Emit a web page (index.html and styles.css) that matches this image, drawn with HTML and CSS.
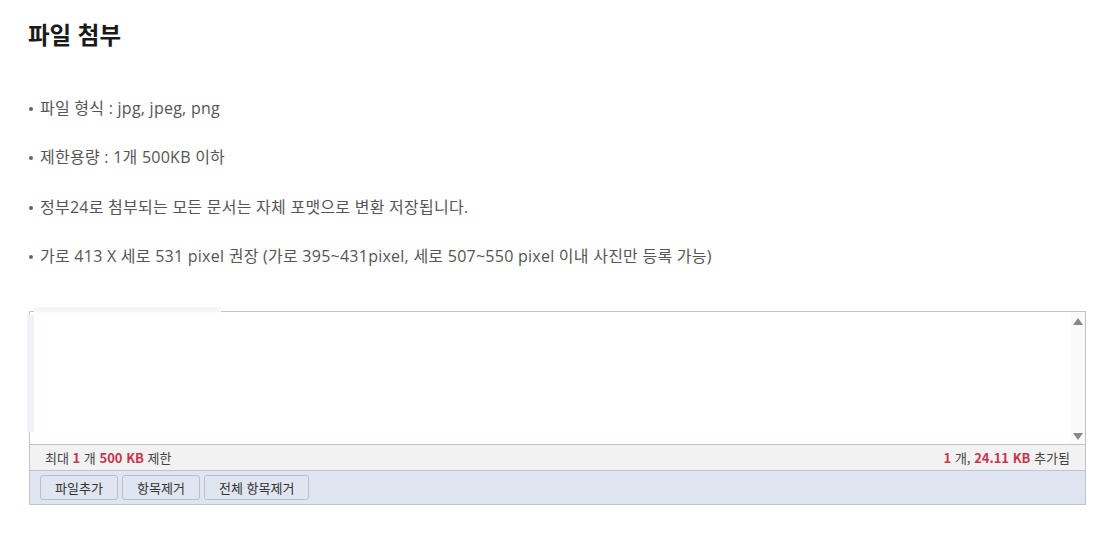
FILE: index.html
```html
<!DOCTYPE html>
<html lang="ko">
<head>
  <meta charset="UTF-8" />
  <title>파일 첨부</title>
  <link rel="stylesheet" href="styles.css">
</head>
<body>
  <div class="page">
    <h2 class="title">파일 첨부</h2>

    <ul class="notes">
      <li>파일 형식 : jpg, jpeg, png</li>
      <li>제한용량 : 1개 500KB 이하</li>
      <li>정부24로 첨부되는 모든 문서는 자체 포맷으로 변환 저장됩니다.</li>
      <li>가로 413 X 세로 531 pixel 권장 (가로 395~431pixel, 세로 507~550 pixel 이내 사진만 등록 가능)</li>
    </ul>

    <div class="uploader">
      <span class="ghost ghost-top"></span>
      <span class="ghost ghost-left"></span>

      <div class="file-list">
        <div class="list-body"></div>
        <div class="scrollbar">
          <span class="arrow up"></span>
          <span class="arrow down"></span>
        </div>
      </div>
      <div class="status">
        <span>최대 <b>1</b> 개 <b>500 KB</b> 제한</span>
        <span><b>1</b> 개, <b>24.11 KB</b> 추가됨</span>
      </div>
      <div class="actions">
        <button class="btn">파일추가</button>
        <button class="btn">항목제거</button>
        <button class="btn">전체 항목제거</button>
      </div>
    </div>
  </div>
</body>
</html>
```

FILE: styles.css
```css
* {
  margin: 0;
  padding: 0;
  box-sizing: border-box;
}

body {
  font-family: "Noto Sans CJK KR", "Noto Sans", sans-serif;
  background-color: #ffffff;
  color: #333;
}

.page {
  padding: 17px 30px 0 28px;
}

.title {
  font-size: 23.5px;
  font-weight: bold;
  color: #1a1a1a;
  line-height: 34px;
}

.notes {
  list-style: none;
  margin-top: 46px;
}

.notes li {
  position: relative;
  padding-left: 12px;
  font-family: "Open Sans", "Noto Sans CJK KR", sans-serif;
  font-size: 16px;
  letter-spacing: 0.25px;
  color: #555;
  line-height: 22px;
  margin-bottom: 27.3px;
}

.notes li::before {
  content: "";
  position: absolute;
  left: 1px;
  top: 10px;
  width: 4px;
  height: 4px;
  border-radius: 50%;
  background-color: #666;
}

.uploader {
  position: relative;
  margin-top: 44px;
  margin-left: 1px;
  border: 1px solid #bcc4d0;
  font-size: 12px;
}

.ghost {
  position: absolute;
  background-color: #f4f6f9;
}

.ghost-top {
  left: 4px;
  top: -5px;
  width: 187px;
  height: 8px;
  border-bottom: 3px solid #fdfdfe;
}

.ghost-left {
  left: -3px;
  top: 3px;
  width: 7px;
  height: 117px;
  background-color: #eff2f6;
}

.file-list {
  display: flex;
  height: 132px;
  background-color: #fff;
}

.list-body {
  flex: 1;
}

.scrollbar {
  width: 15px;
  background-color: #fafafa;
  display: flex;
  flex-direction: column;
  justify-content: space-between;
  align-items: center;
  padding: 6px 0 4px;
}

.arrow {
  width: 0;
  height: 0;
  border-left: 5px solid transparent;
  border-right: 5px solid transparent;
}

.arrow.up {
  border-bottom: 7px solid #888;
}

.arrow.down {
  border-top: 7px solid #888;
}

.status {
  display: flex;
  justify-content: space-between;
  height: 26px;
  line-height: 25px;
  padding: 0 15px;
  font-size: 13px;
  background-color: #f2f2f2;
  border-top: 1px solid #bcc4d0;
  color: #444;
}

.status b {
  color: #c8364e;
}

.actions {
  display: flex;
  gap: 4px;
  height: 34px;
  padding: 4px 10px;
  background-color: #dfe6f1;
  border-top: 1px solid #bcc4d0;
}

.btn {
  height: 25px;
  padding: 0 14px;
  font-family: inherit;
  font-size: 13px;
  color: #333;
  background-color: #dfe6f1;
  border: 1px solid #b7c1ce;
  border-radius: 3px;
}

.btn:first-child,
.btn:nth-child(2) {
  width: 78px;
}
```
